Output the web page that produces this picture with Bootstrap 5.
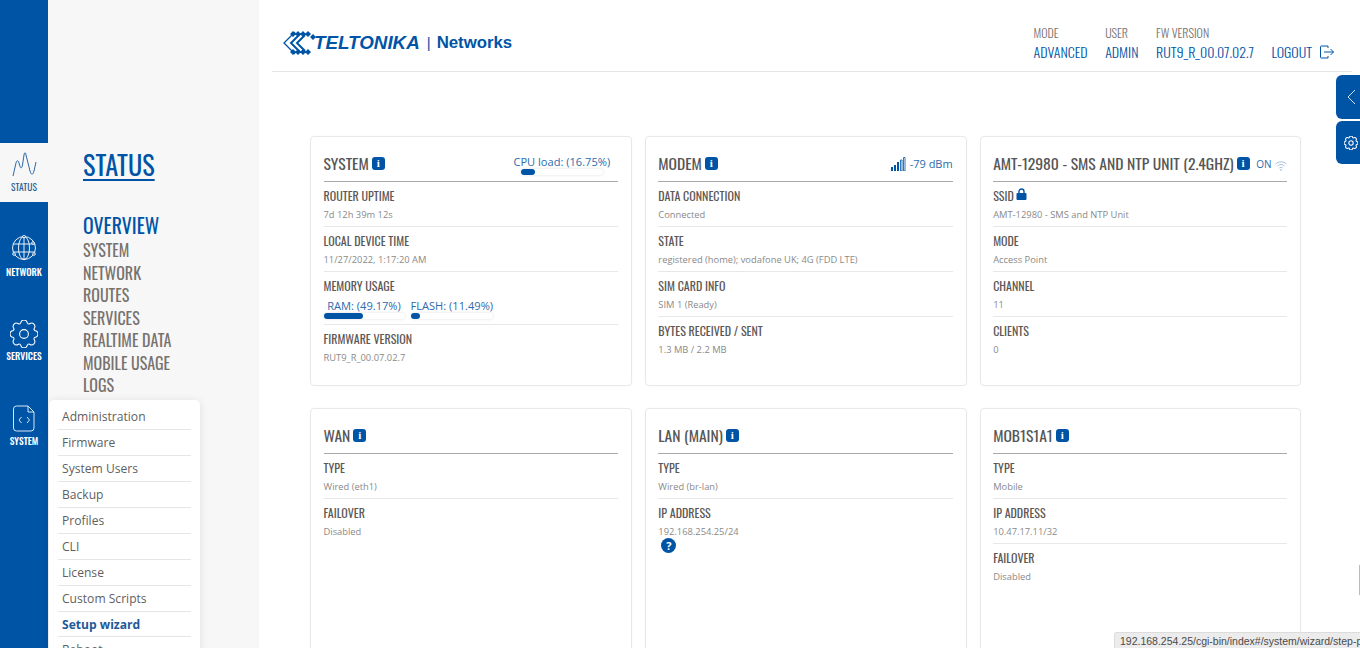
<!DOCTYPE html>
<html lang="en"><head><meta charset="utf-8"><title>Teltonika Status</title>
<link href="https://cdn.jsdelivr.net/npm/bootstrap@5.3.0/dist/css/bootstrap.min.css" rel="stylesheet">
<style>
:root{--tb:#0054a6;--cond:"Oswald","Roboto Condensed","Open Sans",sans-serif}
html,body{height:648px;overflow:hidden}
body{font-family:"Open Sans",sans-serif;color:#5f5f5f;background:#fff}
.shell{height:648px;position:relative;overflow:hidden}
.rail{width:48px;background:var(--tb)}
.rail-top{height:143px;background:var(--tb);border-bottom-right-radius:4px}
.rail-item{height:85px;color:#fff;font:500 9.500px/12px var(--cond);text-align:center;padding-top:33px;flex:none}
.rail-item svg{display:block;margin:0 auto 5px}
.rail-item.on{height:59px;background:#f7f7f7;color:#2d5d92;padding-top:8px;font-weight:400}
.rail-item.on svg{margin-bottom:4px}
.rail-round{border-top-right-radius:4px;background:var(--tb)}
.rail-item svg.gear-ic{margin-bottom:2px}
.rail-item svg.file-ic{margin-bottom:3px}
.subnav{width:211px;background:#f7f7f7;padding:148px 0 0 35px}
.subnav a{text-decoration:none;display:block}
.subnav a.subnav-title{font:400 26.300px/33px var(--cond);color:var(--tb);text-decoration:underline;text-underline-offset:3px;margin-bottom:31px;width:max-content}
.subnav-cur{font:400 19.800px/26px var(--cond);color:var(--tb);margin-bottom:1px}
.subnav-link{font:400 16px/22.500px var(--cond);color:#77726e}
.content{flex:1;min-width:0}
.topbar{height:72px;margin:0 8px 0 13px;border-bottom:1px solid #e6e6e6;padding:0 18px 0 11px}
.brand{display:flex;align-items:center;color:var(--tb);padding-top:14px}
.brand-t{font:italic 700 18.800px/20px "Liberation Sans",sans-serif;margin-left:-3px}
.brand-s{font:700 16.800px/20px "Liberation Sans",sans-serif;margin-left:7px}
.brand-s i{font:400 15px/20px "Liberation Sans",sans-serif;margin-right:6px}
.meta{font-family:var(--cond);text-transform:uppercase;padding-top:24px;margin-right:17.500px}
.meta small{display:block;font-size:12px;line-height:17px;font-weight:300;color:#77726e}
.meta b{display:block;font-weight:300;font-size:14px;line-height:22px;color:var(--tb)}
.logout{font:300 14px/22px var(--cond);color:var(--tb);padding-top:41px}
.cards{padding:64px 58.500px 0 51px}
.cards .row{--bs-gutter-x:13px;--bs-gutter-y:22px}
.panel{height:250px;border:1px solid #e8e8e8;border-radius:4px;padding:13px 13px 0 12.500px;box-shadow:0 0 2px rgba(0,0,0,.04)}
.panel-tall{height:300px}
.panel-head{height:32px;border-bottom:1px solid #a9a9a9;font:400 15.600px/27px var(--cond);color:#565656}
.nfo{display:inline-block;width:13px;height:13px;border-radius:3px;background:var(--tb);color:#fff;font:700 11px/13px "Liberation Serif",serif;text-align:center;vertical-align:3px;margin-left:3px}
.field{height:45px;border-bottom:1px solid #e8e8e8;padding-top:5px}
.field:last-child{border-bottom:0}
.fld-l{font:400 12px/18px var(--cond);color:#5c5856;display:block}
.fld-v{font-size:9.350px;line-height:13px;color:#8a8a8a;display:block;margin-top:3px}
.meter{font:400 11.100px/13px "Open Sans",sans-serif;color:#2c6cab;text-align:center;white-space:nowrap}
.meter-track{height:6px;border-radius:4px;background:#fff;box-shadow:0 0 3px rgba(0,0,0,.14);margin-top:1px;text-align:left}
.meter-bar{display:block;height:6px;border-radius:4px;background:var(--tb)}
.sig{font:400 11px/14px "Open Sans",sans-serif;color:#2c6cab}
.q{display:block;width:15px;height:15px;border-radius:50%;background:var(--tb);color:#fff;font:700 11px/15px "Open Sans",sans-serif;text-align:center;margin-left:3px;margin-top:0}
.sysmenu{position:absolute;left:49px;top:400px;width:151px;height:260px;background:#fff;border-radius:5px;box-shadow:0 1px 8px rgba(0,0,0,.1);padding:4px 9px 0 9px}
.sysmenu a{display:block;height:25.950px;font-size:12.100px;line-height:25px;color:#666;border-bottom:1px solid #e6e6e6;padding-left:4px;text-decoration:none}
.sysmenu a.cur{font-weight:700;color:#235a96}
.flap{position:absolute;right:0;width:24px;background:var(--tb);border-radius:6px 0 0 6px;color:#fff;display:flex;align-items:center;justify-content:center;padding-left:6px}
.flap-a{top:75px;height:44px}
.flap-b{top:121px;height:43px}
.statusurl{position:absolute;left:1114px;right:0;bottom:0;height:16px;background:#ececec;border:1px solid #dcdcdc;border-width:1px 0 0 1px;border-top-left-radius:3px;font:400 10.500px/16px "Liberation Sans",sans-serif;color:#4a4a4a;padding-left:5px;white-space:nowrap;overflow:hidden}
.tick{position:absolute;right:0;top:565px;width:1px;height:30px;background:#bbb}
</style></head><body>
<div class="shell d-flex">
<nav class="rail d-flex flex-column flex-shrink-0">
 <div class="rail-top"></div>
 <div class="rail-item on"><svg width="26" height="26" viewBox="0 0 26 26" fill="none" stroke="#2d6aa8" stroke-width="1"><path d="M2 25 5 12c.5-2.500 2-3.500 3 0l1 3.500c.8 2.500 2 1.500 2.500-1.500L13 4c.5-3 1.500-3 2 0l4 16c1 4 3 4.500 4 0l2-9"/></svg>STATUS</div>
 <div class="rail-item rail-round"><svg width="26" height="26" viewBox="0 0 26 26" fill="none" stroke="#fff" stroke-width=".9"><circle cx="13" cy="13" r="11.500"/><ellipse cx="13" cy="13" rx="5.500" ry="11.500"/><path d="M13 1.500v23M2 9h22M2 17h22"/><g fill="#0054a6"><circle cx="13" cy="1.500" r="1.300"/><circle cx="22" cy="8" r="1.300"/><circle cx="3" cy="19" r="1.300"/><circle cx="23" cy="19" r="1.300"/></g></svg>NETWORK</div>
 <div class="rail-item"><svg class="gear-ic" width="28" height="28" viewBox="0 0 16 16" fill="none" stroke="#fff" stroke-width=".6"><circle cx="8" cy="8" r="2.500"/><path d="M9.796 1.343c-.527-1.790-3.065-1.790-3.592 0l-.094.319a.873.873 0 0 1-1.255.52l-.292-.16c-1.640-.892-3.433.902-2.540 2.541l.159.292a.873.873 0 0 1-.52 1.255l-.319.094c-1.790.527-1.790 3.065 0 3.592l.319.094a.873.873 0 0 1 .52 1.255l-.16.292c-.892 1.640.901 3.434 2.541 2.540l.292-.159a.873.873 0 0 1 1.255.52l.094.319c.527 1.790 3.065 1.790 3.592 0l.094-.319a.873.873 0 0 1 1.255-.52l.292.16c1.640.893 3.434-.902 2.540-2.541l-.159-.292a.873.873 0 0 1 .52-1.255l.319-.094c1.790-.527 1.790-3.065 0-3.592l-.319-.094a.873.873 0 0 1-.52-1.255l.16-.292c.893-1.640-.902-3.433-2.541-2.540l-.292.159a.873.873 0 0 1-1.255-.52z"/></svg>SERVICES</div>
 <div class="rail-item"><svg class="file-ic" width="22" height="27" viewBox="0 0 22 27" fill="none" stroke="#d9e6f3" stroke-width="1"><path d="M3.500 1H15l6 6v16a3 3 0 0 1-3 3H3.500a3 3 0 0 1-3-3V4a3 3 0 0 1 3-3zM15 1v6h6"/><path d="M8.500 12 6 15l2.500 3M14 12l2.500 3-2.500 3"/></svg>SYSTEM</div>
</nav>
<aside class="subnav flex-shrink-0">
 <a class="subnav-title">STATUS</a>
 <a class="subnav-cur">OVERVIEW</a>
 <a class="subnav-link">SYSTEM</a><a class="subnav-link">NETWORK</a><a class="subnav-link">ROUTES</a><a class="subnav-link">SERVICES</a><a class="subnav-link">REALTIME DATA</a><a class="subnav-link">MOBILE USAGE</a><a class="subnav-link">LOGS</a>
</aside>
<main class="content">
 <header class="topbar d-flex justify-content-between">
  <div class="brand"><svg width="34" height="24" viewBox="0 0 34 24" fill="#0054a6"><path d="M10 0l3 3-3 3-3-3zM15 0l3 3-3 3-3-3zM20 0l3 3-3 3-3-3zM25 0l3 3-3 3-3-3zM30 3l3 3-3 3-3-3z"/><path d="M10 24l3-3-3-3-3 3zM15 24l3-3-3-3-3 3zM20 24l3-3-3-3-3 3zM25 24l3-3-3-3-3 3z"/><path d="M12 1 1 12l11 11" fill="none" stroke="#0054a6" stroke-width="1.300"/><path d="M17 3 8 12l9 9M22 4l-8 8 8 8" fill="none" stroke="#0054a6" stroke-width="2"/></svg><span class="brand-t">TELTONIKA</span><span class="brand-s"><i>|</i>Networks</span></div>
  <div class="d-flex">
   <div class="meta"><small>Mode</small><b>Advanced</b></div>
   <div class="meta"><small>User</small><b>Admin</b></div>
   <div class="meta"><small>FW version</small><b>RUT9_R_00.07.02.7</b></div>
   <div class="logout d-flex align-items-start gap-2">LOGOUT <svg class="mt-1" width="14" height="14" viewBox="0 0 14 14" fill="none" stroke="#0054a6"><path d="M8 3V1H1.500A1 1 0 0 0 .5 2v10a1 1 0 0 0 1 1H8v-2M4 7h9.500M10.500 4l3 3-3 3"/></svg></div>
  </div>
 </header>
 <div class="cards">
  <div class="row">
   <div class="col-4"><section class="panel">
    <div class="panel-head d-flex justify-content-between"><div>SYSTEM<span class="nfo">i</span></div><div class="meter" style="width:98px;margin:5px 7px 0 0"><div>CPU load: (16.75%)</div><div class="meter-track" style="width:82px;margin-left:8px"><span class="meter-bar" style="width:16.750%"></span></div></div></div>
    <div class="field"><span class="fld-l">ROUTER UPTIME</span><span class="fld-v">7d 12h 39m 12s</span></div>
    <div class="field"><span class="fld-l">LOCAL DEVICE TIME</span><span class="fld-v">11/27/2022, 1:17:20 AM</span></div>
    <div class="field" style="height:53px"><span class="fld-l">MEMORY USAGE</span><div class="d-flex mt-1"><div class="meter" style="width:81px;margin-right:6px"><div>RAM: (49.17%)</div><div class="meter-track"><span class="meter-bar" style="width:49.170%"></span></div></div><div class="meter" style="width:82px"><div>FLASH: (11.49%)</div><div class="meter-track"><span class="meter-bar" style="width:11.490%"></span></div></div></div></div>
    <div class="field"><span class="fld-l">FIRMWARE VERSION</span><span class="fld-v">RUT9_R_00.07.02.7</span></div>
   </section></div>
   <div class="col-4"><section class="panel">
    <div class="panel-head d-flex justify-content-between"><div>MODEM<span class="nfo">i</span></div><div class="sig d-flex align-items-center gap-1" style="height:28px"><svg width="15" height="14" viewBox="0 0 15 14"><path fill="#0054a6" d="M0 10h2v4H0zM3 8h2v6H3zM6 5h2v9H6z"/><path fill="none" stroke="#0054a6" stroke-width=".8" d="M9.500 3h1.500v11H9.500zM12.500 .5H14V14h-1.500z"/></svg>-79 dBm</div></div>
    <div class="field"><span class="fld-l">DATA CONNECTION</span><span class="fld-v">Connected</span></div>
    <div class="field"><span class="fld-l">STATE</span><span class="fld-v">registered (home); vodafone UK; 4G (FDD LTE)</span></div>
    <div class="field"><span class="fld-l">SIM CARD INFO</span><span class="fld-v">SIM 1 (Ready)</span></div>
    <div class="field"><span class="fld-l">BYTES RECEIVED / SENT</span><span class="fld-v">1.3 MB / 2.2 MB</span></div>
   </section></div>
   <div class="col-4"><section class="panel">
    <div class="panel-head d-flex justify-content-between"><div class="text-nowrap">AMT-12980 - SMS AND NTP UNIT (2.4GHZ)<span class="nfo">i</span></div><div class="sig d-flex align-items-start gap-1" style="margin-top:7px;font-size:10px;line-height:14px">ON<svg width="12" height="10" viewBox="0 0 12 10" fill="none" stroke="#8fb3d4" stroke-width=".8" class="mt-1"><path d="M.5 3a8 8 0 0 1 11 0M2.500 5a5 5 0 0 1 7 0M4.300 7a2.500 2.500 0 0 1 3.400 0"/><circle cx="6" cy="9" r=".5"/></svg></div></div>
    <div class="field"><span class="fld-l">SSID <svg width="11" height="12" viewBox="0 0 11 12" style="vertical-align:1px"><path fill="none" stroke="#0054a6" stroke-width="1.400" d="M3 6V3.500a2.500 2.500 0 0 1 5 0V6"/><rect y="5" x=".5" width="10" height="7" rx="1" fill="#0054a6"/></svg></span><span class="fld-v">AMT-12980 - SMS and NTP Unit</span></div>
    <div class="field"><span class="fld-l">MODE</span><span class="fld-v">Access Point</span></div>
    <div class="field"><span class="fld-l">CHANNEL</span><span class="fld-v">11</span></div>
    <div class="field"><span class="fld-l">CLIENTS</span><span class="fld-v">0</span></div>
   </section></div>
   <div class="col-4"><section class="panel panel-tall">
    <div class="panel-head"><div>WAN<span class="nfo">i</span></div></div>
    <div class="field"><span class="fld-l">TYPE</span><span class="fld-v">Wired (eth1)</span></div>
    <div class="field"><span class="fld-l">FAILOVER</span><span class="fld-v">Disabled</span></div>
   </section></div>
   <div class="col-4"><section class="panel panel-tall">
    <div class="panel-head"><div>LAN (MAIN)<span class="nfo">i</span></div></div>
    <div class="field"><span class="fld-l">TYPE</span><span class="fld-v">Wired (br-lan)</span></div>
    <div class="field"><span class="fld-l">IP ADDRESS</span><span class="fld-v">192.168.254.25/24</span><span class="q">?</span></div>
   </section></div>
   <div class="col-4"><section class="panel panel-tall">
    <div class="panel-head"><div>MOB1S1A1<span class="nfo">i</span></div></div>
    <div class="field"><span class="fld-l">TYPE</span><span class="fld-v">Mobile</span></div>
    <div class="field"><span class="fld-l">IP ADDRESS</span><span class="fld-v">10.47.17.11/32</span></div>
    <div class="field"><span class="fld-l">FAILOVER</span><span class="fld-v">Disabled</span></div>
   </section></div>
  </div>
 </div>
</main>
<div class="sysmenu"><a>Administration</a><a>Firmware</a><a>System Users</a><a>Backup</a><a>Profiles</a><a>CLI</a><a>License</a><a>Custom Scripts</a><a class="cur">Setup wizard</a><a>Reboot</a></div>
<div class="flap flap-a"><svg width="10" height="16" viewBox="0 0 10 16" fill="none" stroke="#cfe0f1" stroke-width="1"><path d="M9 1 2 8l7 7"/></svg></div>
<div class="flap flap-b"><svg width="14" height="14" viewBox="0 0 16 16" fill="none" stroke="#fff" stroke-width="1.200"><circle cx="8" cy="8" r="2.500"/><path d="M9.796 1.343c-.527-1.790-3.065-1.790-3.592 0l-.094.319a.873.873 0 0 1-1.255.52l-.292-.16c-1.640-.892-3.433.902-2.540 2.541l.159.292a.873.873 0 0 1-.52 1.255l-.319.094c-1.790.527-1.790 3.065 0 3.592l.319.094a.873.873 0 0 1 .52 1.255l-.16.292c-.892 1.640.901 3.434 2.541 2.540l.292-.159a.873.873 0 0 1 1.255.52l.094.319c.527 1.790 3.065 1.790 3.592 0l.094-.319a.873.873 0 0 1 1.255-.52l.292.16c1.640.893 3.434-.902 2.540-2.541l-.159-.292a.873.873 0 0 1 .52-1.255l.319-.094c1.790-.527 1.790-3.065 0-3.592l-.319-.094a.873.873 0 0 1-.52-1.255l.16-.292c.893-1.640-.902-3.433-2.541-2.540l-.292.159a.873.873 0 0 1-1.255-.52z"/></svg></div>
<div class="tick"></div>
<div class="statusurl">192.168.254.25/cgi-bin/index#/system/wizard/step-pwd</div>
</div>
<script src="https://cdn.jsdelivr.net/npm/bootstrap@5.3.0/dist/js/bootstrap.bundle.min.js"></script>
</body></html>
